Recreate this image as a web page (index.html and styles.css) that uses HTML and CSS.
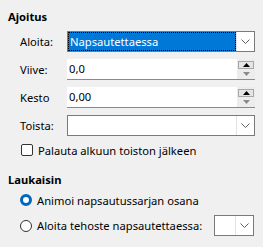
FILE: index.html
```html
<!DOCTYPE html>
<html lang="fi">
<head>
<meta charset="utf-8">
<link rel="stylesheet" href="styles.css">
</head>
<body>
<div class="panel">
  <div class="section-title">Ajoitus</div>
  <div class="form-grid">
    <span class="label">Aloita:</span>
    <div class="combo combo-focused">
      <div class="combo-value"><span class="selected">Napsautettaessa</span></div>
      <div class="combo-button"><svg width="9" height="5" viewBox="0 0 9 5"><path d="M0.5 0.5 L4.5 4.5 L8.5 0.5" fill="none" stroke="#606060" stroke-width="1"/></svg></div>
    </div>

    <span class="label">Viive:</span>
    <div class="spin">
      <div class="spin-value">0,0</div>
      <div class="spin-buttons">
        <div class="spin-up"><svg width="7" height="4" viewBox="0 0 7 4"><path d="M0 4 L3.5 0 L7 4 Z" fill="#000"/></svg></div>
        <div class="spin-down"><svg width="7" height="4" viewBox="0 0 7 4"><path d="M0 0 L3.5 4 L7 0 Z" fill="#8a8a8a"/></svg></div>
      </div>
    </div>

    <span class="label">Kesto</span>
    <div class="spin">
      <div class="spin-value">0,00</div>
      <div class="spin-buttons">
        <div class="spin-up"><svg width="7" height="4" viewBox="0 0 7 4"><path d="M0 4 L3.5 0 L7 4 Z" fill="#000"/></svg></div>
        <div class="spin-down"><svg width="7" height="4" viewBox="0 0 7 4"><path d="M0 0 L3.5 4 L7 0 Z" fill="#8a8a8a"/></svg></div>
      </div>
    </div>

    <span class="label">Toista:</span>
    <div class="combo">
      <div class="combo-value"></div>
      <div class="combo-button"><svg width="9" height="5" viewBox="0 0 9 5"><path d="M0.5 0.5 L4.5 4.5 L8.5 0.5" fill="none" stroke="#606060" stroke-width="1"/></svg></div>
    </div>
  </div>

  <div class="check-row">
    <span class="checkbox"></span>
    <span>Palauta alkuun toiston jälkeen</span>
  </div>

  <div class="section-title second">Laukaisin</div>

  <div class="radio-row first">
    <span class="radio checked"></span>
    <span>Animoi napsautussarjan osana</span>
  </div>
  <div class="radio-row with-combo">
    <span class="radio"></span>
    <span class="radio-label">Aloita tehoste napsautettaessa:</span>
    <div class="combo combo-small">
      <div class="combo-value"></div>
      <div class="combo-button"><svg width="9" height="5" viewBox="0 0 9 5"><path d="M0.5 0.5 L4.5 4.5 L8.5 0.5" fill="none" stroke="#606060" stroke-width="1"/></svg></div>
    </div>
  </div>
</div>
</body>
</html>
```

FILE: styles.css
```css
html, body {
  margin: 0;
  padding: 0;
  background: #f0f0f0;
}

body {
  font-family: "Noto Sans", "DejaVu Sans", sans-serif;
  font-size: 11.2px;
  color: #000;
  width: 263px;
  height: 247px;
  overflow: hidden;
}

.panel {
  padding: 9px 8px 0 8px;
}

.section-title {
  font-weight: bold;
  line-height: 16px;
  height: 16px;
}

.section-title.second {
  margin-top: 14px;
}

.form-grid {
  margin-top: 6px;
  margin-left: 12px;
  display: grid;
  grid-template-columns: 47px 188px;
  grid-auto-rows: 21px;
  row-gap: 7px;
  align-items: center;
}

.label {
  line-height: 21px;
}

.combo {
  box-sizing: border-box;
  height: 21px;
  border: 1px solid #7a7a7a;
  background: #fff;
  display: flex;
}

.combo-value {
  flex: 1;
  display: flex;
  padding: 1px;
}

.combo-focused .combo-value {
  padding: 0;
}

.selected {
  flex: 1;
  background: #0078d7;
  color: #fff;
  outline: 1px dotted #000;
  outline-offset: -1px;
  border: 1px dotted #fff;
  line-height: 17px;
  padding-left: 1px;
}

.combo-button {
  width: 17px;
  border-left: 1px solid #e3e3e3;
  display: flex;
  align-items: center;
  justify-content: center;
  background: #fff;
}

.spin {
  box-sizing: border-box;
  height: 21px;
  background: #fff;
  border-bottom: 1px solid #8a8a8a;
  display: flex;
}

.spin-value {
  flex: 1;
  line-height: 20px;
  padding-left: 2px;
}

.spin-buttons {
  width: 18px;
  background: #ececec;
  display: flex;
  flex-direction: column;
  padding: 2px 1px 1px 1px;
  box-sizing: border-box;
}

.spin-up {
  box-sizing: border-box;
  height: 8px;
  border: 1px solid #a8a8a8;
  background: #e5e5e5;
  display: flex;
  align-items: center;
  justify-content: center;
}

.spin-down {
  height: 9px;
  display: flex;
  align-items: center;
  justify-content: center;
}

.check-row {
  margin-top: 6px;
  margin-left: 13px;
  display: flex;
  align-items: center;
  gap: 5px;
  height: 16px;
}

.checkbox {
  box-sizing: border-box;
  width: 12px;
  height: 12px;
  border: 1px solid #333;
  border-radius: 2px;
  background: #fff;
}

.radio-row {
  display: flex;
  align-items: center;
  margin-left: 12px;
  gap: 5px;
}

.radio-row.first {
  margin-top: 4px;
  height: 16px;
}

.radio-row.with-combo {
  margin-top: 7px;
  height: 21px;
}

.radio {
  box-sizing: border-box;
  width: 12px;
  height: 12px;
  border-radius: 50%;
  border: 1px solid #333;
  background: #fff;
}

.radio.checked {
  border: 3.5px solid #0067c0;
  background: #fff;
}

.radio-label {
  flex: 0 0 auto;
}

.combo-small {
  width: 40px;
  margin-left: auto;
  margin-right: 1px;
}
```
